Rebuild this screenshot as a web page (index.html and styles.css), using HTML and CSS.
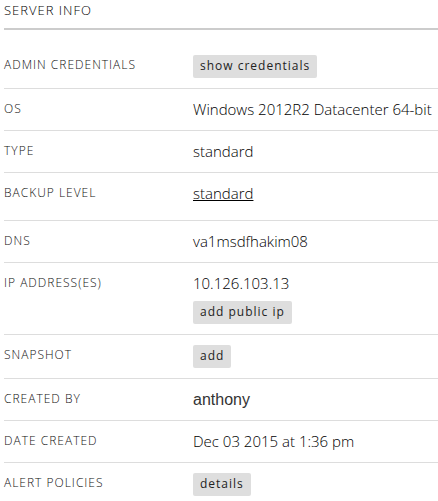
FILE: index.html
```html
<!DOCTYPE html>
<html lang="en">
<head>
<meta charset="utf-8">
<title>Server info</title>
<link rel="stylesheet" href="styles.css">
</head>
<body>
<section class="server-info">
<h2 class="title">Server info</h2>
<dl class="list">
<div class="row"><dt>Admin credentials</dt><dd><button type="button" class="btn">show credentials</button></dd></div>
<div class="row"><dt>OS</dt><dd>Windows 2012R2 Datacenter 64-bit</dd></div>
<div class="row"><dt>Type</dt><dd>standard</dd></div>
<div class="row tall"><dt>Backup level</dt><dd><a href="#backup">standard</a></dd></div>
<div class="row"><dt>DNS</dt><dd>va1msdfhakim08</dd></div>
<div class="row"><dt>IP address(es)</dt><dd>10.126.103.13<button type="button" class="btn below">add public ip</button></dd></div>
<div class="row"><dt>Snapshot</dt><dd><button type="button" class="btn">add</button></dd></div>
<div class="row"><dt>Created by</dt><dd class="plain">anthony</dd></div>
<div class="row"><dt>Date created</dt><dd>Dec 03 2015 at 1:36 pm</dd></div>
<div class="row"><dt>Alert policies</dt><dd><button type="button" class="btn">details</button></dd></div>
</dl>
</section>
</body>
</html>
```
FILE: styles.css
```css
body {
  margin: 0;
  background: #fff;
  color: #000;
  font-family: "Open Sans", sans-serif;
}

.server-info {
  padding-left: 4px;
  overflow: hidden;
}

.title {
  margin: 0;
  padding-bottom: 8px;
  border-bottom: 2px solid #ccc;
  font-size: 13px;
  line-height: 20px;
  font-weight: 300;
  letter-spacing: 1px;
  text-transform: uppercase;
}

.list {
  margin: 15px 0 0;
}

.row {
  display: grid;
  grid-template-columns: 189px 1fr;
  padding: 10px 0;
  border-bottom: 1px solid #ddd;
}

.row:last-child {
  border-bottom: 0;
}

.tall {
  padding-bottom: 16px;
}

dt {
  color: #111;
  font-size: 12px;
  line-height: 20px;
  font-weight: 300;
  letter-spacing: 1px;
  text-transform: uppercase;
}

dd {
  margin: 0;
  font-size: 15px;
  line-height: 21px;
  font-weight: 300;
  white-space: nowrap;
}

dd a {
  color: inherit;
}

.plain {
  color: #333;
  font-family: "Liberation Sans", sans-serif;
  font-size: 16px;
  font-weight: 400;
}

.btn {
  display: block;
  padding: 0 7px 2px;
  border: 0;
  border-radius: 2px;
  background: #dedede;
  color: #222;
  font: 400 12px/21px "Open Sans", sans-serif;
  letter-spacing: 1px;
}

.below {
  margin-top: 7px;
}
```
